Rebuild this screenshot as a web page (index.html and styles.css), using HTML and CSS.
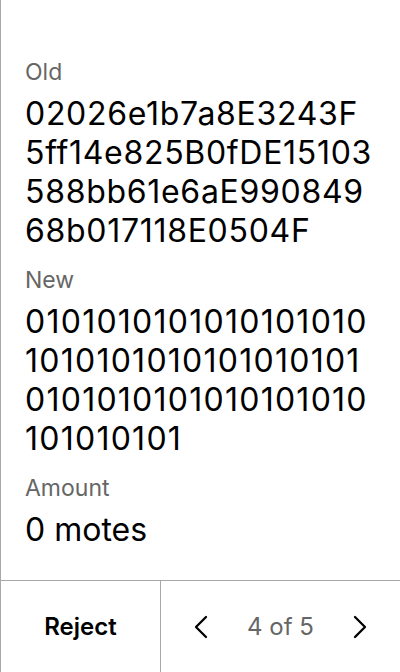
FILE: index.html
```html
<!DOCTYPE html>
<html>
<head>
<meta charset="utf-8">
<link rel="stylesheet" href="styles.css">
</head>
<body>
<div class="screen">
  <main class="content">
    <div class="field">
      <div class="label">Old</div>
      <div class="value hex">
        <span class="line">02026e1b7a8E3243F</span>
        <span class="line">5ff14e825B0fDE15103</span>
        <span class="line">588bb61e6aE990849</span>
        <span class="line">68b017118E0504F</span>
      </div>
    </div>
    <div class="field">
      <div class="label">New</div>
      <div class="value bin">
        <span class="line">0101010101010101010</span>
        <span class="line">1010101010101010101</span>
        <span class="line">0101010101010101010</span>
        <span class="line">101010101</span>
      </div>
    </div>
    <div class="field">
      <div class="label">Amount</div>
      <div class="value">
        <span class="line">0 motes</span>
      </div>
    </div>
  </main>
  <footer class="footer">
    <button class="reject">Reject</button>
    <div class="nav">
      <svg class="chev" width="18" height="24" viewBox="0 0 18 24"><path d="M15 2 L5 12 L15 22" fill="none" stroke="#000" stroke-width="2.3" stroke-linecap="round" stroke-linejoin="round"/></svg>
      <span class="pager">4 of 5</span>
      <svg class="chev" width="18" height="24" viewBox="0 0 18 24"><path d="M3 2 L13 12 L3 22" fill="none" stroke="#000" stroke-width="2.3" stroke-linecap="round" stroke-linejoin="round"/></svg>
    </div>
  </footer>
</div>
</body>
</html>
```

FILE: styles.css
```css
html, body {
  margin: 0;
  padding: 0;
  background: #fff;
}
body {
  font-family: Inter, "Noto Sans", sans-serif;
  color: #000;
}
.screen {
  width: 400px;
  height: 672px;
  box-sizing: border-box;
  border-left: 1px solid #a8a8a8;
  display: flex;
  flex-direction: column;
}
.content {
  flex: 1;
  padding: 58px 4px 0 24px;
  display: flex;
  flex-direction: column;
  gap: 16px;
}
.label {
  font-size: 23px;
  line-height: 28px;
  color: #666;
  margin-bottom: 8px;
}
.value {
  font-size: 32px;
  line-height: 39px;
  color: #000;
}
.hex {
  letter-spacing: 0.7px;
}
.bin {
  letter-spacing: 1.25px;
}
.line {
  display: block;
  white-space: nowrap;
}
.footer {
  height: 92px;
  border-top: 1px solid #a8a8a8;
  display: flex;
  box-sizing: border-box;
}
.reject {
  width: 160px;
  border: none;
  border-right: 1px solid #a8a8a8;
  background: #fff;
  font-family: Inter, "Noto Sans", sans-serif;
  font-size: 24px;
  font-weight: 600;
  color: #000;
  padding: 0;
}
.nav {
  flex: 1;
  display: flex;
  align-items: center;
  justify-content: space-between;
  padding: 0 30px 0 30px;
}
.pager {
  font-size: 24px;
  color: #666;
}
.chev {
  display: block;
}
```
